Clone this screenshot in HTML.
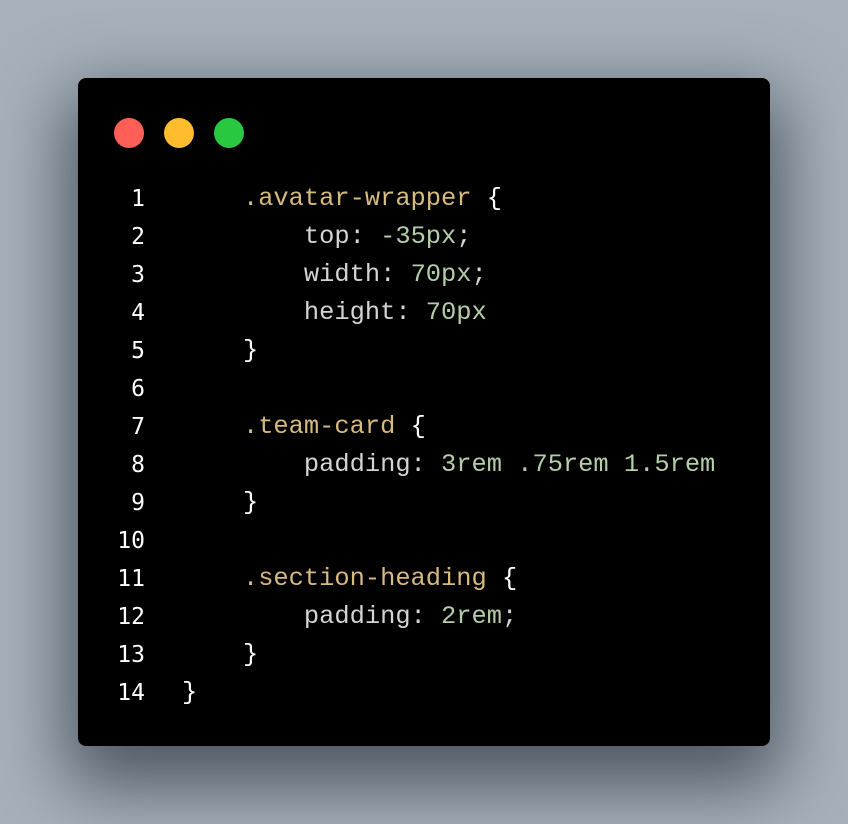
<!DOCTYPE html>
<html><head><style>
html,body{margin:0;padding:0}
body{width:848px;height:824px;background:#a7b1bc;position:relative;overflow:hidden}
.card{position:absolute;left:78px;top:78px;width:692px;height:668px;background:#000;border-radius:8px;box-shadow:0 28px 70px 12px rgba(40,48,58,.7)}
.dot{position:absolute;top:118px;width:30px;height:30px;border-radius:50%}
.l{position:absolute;left:0;height:38px;line-height:38px;font-family:"Liberation Mono","DejaVu Sans Mono",monospace;font-size:25.4px;white-space:pre;color:#d4d4d4}
.n{position:absolute;left:90px;width:55px;text-align:right;color:#fff;font-family:"DejaVu Sans Mono",monospace;font-size:23px}
.c{position:absolute;left:182px}
.s{color:#d7ba7d}.v{color:#b5cea8}.b{color:#fff}
</style></head><body>
<div class="card"></div>
<div class="dot" style="left:114px;background:#ff5f57"></div>
<div class="dot" style="left:164px;background:#febc2e"></div>
<div class="dot" style="left:214px;background:#28c840"></div>
<div class="l" style="top:180px"><span class="n">1</span><span class="c">    <span class="s">.avatar-wrapper</span> <span class="b">{</span></span></div>
<div class="l" style="top:218px"><span class="n">2</span><span class="c">        top: <span class="v">-35px</span>;</span></div>
<div class="l" style="top:256px"><span class="n">3</span><span class="c">        width: <span class="v">70px</span>;</span></div>
<div class="l" style="top:294px"><span class="n">4</span><span class="c">        height: <span class="v">70px</span></span></div>
<div class="l" style="top:332px"><span class="n">5</span><span class="c">    <span class="b">}</span></span></div>
<div class="l" style="top:370px"><span class="n">6</span></div>
<div class="l" style="top:408px"><span class="n">7</span><span class="c">    <span class="s">.team-card</span> <span class="b">{</span></span></div>
<div class="l" style="top:446px"><span class="n">8</span><span class="c">        padding: <span class="v">3rem .75rem 1.5rem</span></span></div>
<div class="l" style="top:484px"><span class="n">9</span><span class="c">    <span class="b">}</span></span></div>
<div class="l" style="top:522px"><span class="n">10</span></div>
<div class="l" style="top:560px"><span class="n">11</span><span class="c">    <span class="s">.section-heading</span> <span class="b">{</span></span></div>
<div class="l" style="top:598px"><span class="n">12</span><span class="c">        padding: <span class="v">2rem</span>;</span></div>
<div class="l" style="top:636px"><span class="n">13</span><span class="c">    <span class="b">}</span></span></div>
<div class="l" style="top:674px"><span class="n">14</span><span class="c"><span class="b">}</span></span></div>
</body></html>
